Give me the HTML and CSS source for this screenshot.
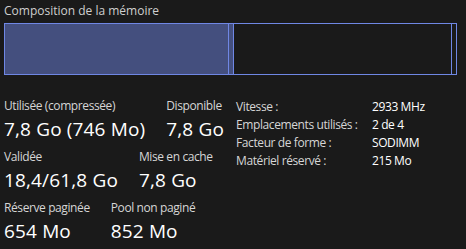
FILE: index.html
```html
<!DOCTYPE html>
<html lang="fr">
<head>
    <meta charset="UTF-8">
    <title>Mémoire</title>
    <link rel="stylesheet" href="styles.css">
</head>
<body>
    <div class="panel">
        <div class="title">Composition de la mémoire</div>

        <!-- barre de composition -->
        <div class="bar">
            <div class="seg seg-used"></div>
            <div class="seg seg-modified"></div>
            <div class="seg seg-standby"></div>
            <div class="seg seg-free"></div>
        </div>

        <div class="details">
            <div class="stats">
                <div class="stat-row">
                    <div class="stat">
                        <div class="stat-label">Utilisée (compressée)</div>
                        <div class="stat-value">7,8 Go (746 Mo)</div>
                    </div>
                    <div class="stat">
                        <div class="stat-label">Disponible</div>
                        <div class="stat-value">7,8 Go</div>
                    </div>
                </div>
                <div class="stat-row">
                    <div class="stat">
                        <div class="stat-label">Validée</div>
                        <div class="stat-value">18,4/61,8 Go</div>
                    </div>
                    <div class="stat">
                        <div class="stat-label">Mise en cache</div>
                        <div class="stat-value">7,8 Go</div>
                    </div>
                </div>
                <div class="stat-row">
                    <div class="stat">
                        <div class="stat-label">Réserve paginée</div>
                        <div class="stat-value">654 Mo</div>
                    </div>
                    <div class="stat">
                        <div class="stat-label">Pool non paginé</div>
                        <div class="stat-value">852 Mo</div>
                    </div>
                </div>
            </div>

            <dl class="specs">
                <dt>Vitesse :</dt><dd>2933 MHz</dd>
                <dt>Emplacements utilisés :</dt><dd>2 de 4</dd>
                <dt>Facteur de forme :</dt><dd>SODIMM</dd>
                <dt>Matériel réservé :</dt><dd>215 Mo</dd>
            </dl>
        </div>
    </div>
</body>
</html>
```

FILE: styles.css
```css
:root {
    --bg-color: #1a1a1a;
    --bar-border: #6f87e4;
    --bar-fill: #444f7e;
    --label-color: #d6d6d6;
    --value-color: #ffffff;
}

* {
    box-sizing: border-box;
    margin: 0;
    padding: 0;
}

body {
    font-family: "Open Sans", "Noto Sans", sans-serif;
    background-color: var(--bg-color);
    color: var(--label-color);
}

.panel {
    padding: 3px 0 0 4px;
}

.title {
    font-size: 12px;
    line-height: 16px;
    color: #cfcfcf;
    margin-bottom: 4px;
}

.bar {
    display: flex;
    width: 453px;
    height: 52px;
    border: 1px solid var(--bar-border);
}

.seg {
    border-right: 1px solid var(--bar-border);
}

.seg-used {
    width: 224px;
    background-color: var(--bar-fill);
}

.seg-modified {
    width: 5px;
    background-color: var(--bar-fill);
}

.seg-standby {
    width: 218px;
}

.seg-free {
    flex: 1;
    border-right: none;
}

.details {
    display: flex;
    align-items: flex-start;
    margin-top: 23px;
}

.stats {
    width: 232px;
    display: flex;
    flex-direction: column;
    gap: 7px;
}

.stat-row {
    display: flex;
    gap: 21px;
}

.stat-label {
    font-size: 12px;
    line-height: 16px;
    letter-spacing: -0.4px;
}

.stat-value {
    font-size: 19px;
    line-height: 26px;
    margin-top: 2px;
    letter-spacing: 0.15px;
    color: var(--value-color);
}

/* caractéristiques matérielles */
.specs {
    display: grid;
    grid-template-columns: 136px auto;
    font-size: 12px;
    line-height: 18px;
    letter-spacing: -0.4px;
}

.specs dt {
    color: var(--label-color);
}

.specs dd {
    color: var(--value-color);
}
```
